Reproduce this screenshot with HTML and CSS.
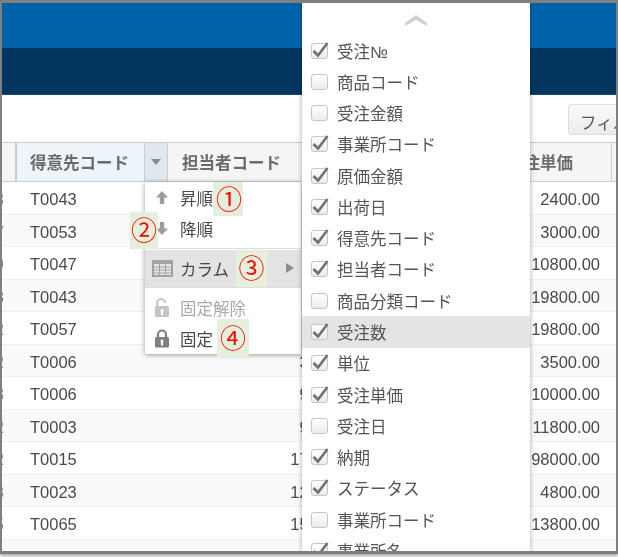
FILE: index.html
```html
<!DOCTYPE html>
<html lang="ja">
<head>
<meta charset="utf-8">
<title>受注一覧</title>
<link rel="stylesheet" href="styles.css">
</head>
<body>
<svg class="defs" width="0" height="0" aria-hidden="true">
  <symbol id="chk" viewBox="0 0 20 20"><path d="M3.5 11 8 15.5 17.5 3" fill="none" stroke="#707070" stroke-width="2.6"/></symbol>
</svg>
<div class="frame">
  <div class="bar-blue"></div>
  <div class="bar-navy"></div>
  <div class="toolbar"><div class="filter-btn">フィルタ</div></div>
  <div class="head row-grid">
    <div class="hc"></div>
    <div class="hc sorted"><span class="hc-label">得意先コード</span><span class="hc-drop"><i class="tri-down"></i></span></div>
    <div class="hc"><span class="hc-label">担当者コード</span></div>
    <div class="hc"></div>
    <div class="hc"><span class="hc-label unit">受注単価</span></div>
    <div class="hc"></div>
  </div>
  <div class="row row-grid"><div class="c0">3</div><div class="c1">T0043</div><div class="c2"></div><div class="c3"></div><div class="c4">2400.00</div></div>
  <div class="row row-grid"><div class="c0">7</div><div class="c1">T0053</div><div class="c2"></div><div class="c3"></div><div class="c4">3000.00</div></div>
  <div class="row row-grid"><div class="c0">9</div><div class="c1">T0047</div><div class="c2"></div><div class="c3"></div><div class="c4">10800.00</div></div>
  <div class="row row-grid"><div class="c0">3</div><div class="c1">T0043</div><div class="c2"></div><div class="c3"></div><div class="c4">19800.00</div></div>
  <div class="row row-grid"><div class="c0">2</div><div class="c1">T0057</div><div class="c2"></div><div class="c3"></div><div class="c4">19800.00</div></div>
  <div class="row row-grid"><div class="c0">2</div><div class="c1">T0006</div><div class="c2">350</div><div class="c3"></div><div class="c4">3500.00</div></div>
  <div class="row row-grid"><div class="c0">3</div><div class="c1">T0006</div><div class="c2">900</div><div class="c3"></div><div class="c4">10000.00</div></div>
  <div class="row row-grid"><div class="c0">2</div><div class="c1">T0003</div><div class="c2">950</div><div class="c3"></div><div class="c4">11800.00</div></div>
  <div class="row row-grid"><div class="c0">2</div><div class="c1">T0015</div><div class="c2">1700</div><div class="c3"></div><div class="c4">98000.00</div></div>
  <div class="row row-grid"><div class="c0">3</div><div class="c1">T0023</div><div class="c2">1200</div><div class="c3"></div><div class="c4">4800.00</div></div>
  <div class="row row-grid"><div class="c0">5</div><div class="c1">T0065</div><div class="c2">1500</div><div class="c3"></div><div class="c4">13800.00</div></div>
  <div class="row row-grid"><div class="c0">3</div><div class="c1">T0043</div><div class="c2">1800</div><div class="c3"></div><div class="c4">9800.00</div></div>

  <div class="menu1">
    <div class="mi"><span class="mi-ico"><svg width="14" height="15" viewBox="0 0 14 15"><path d="M7 1 13 7.5H9.2V14H4.8V7.5H1Z" fill="#9c9c9c"/></svg></span>昇順</div>
    <div class="mi"><span class="mi-ico"><svg width="14" height="15" viewBox="0 0 14 15"><path d="M7 14 13 7.5H9.2V1H4.8V7.5H1Z" fill="#9c9c9c"/></svg></span>降順</div>
    <div class="msep"></div>
    <div class="mi mi-col"><span class="mi-ico"><svg width="21" height="17" viewBox="0 0 21 17"><rect width="21" height="17" fill="#a2a2a2"/><path d="M2 4h5v11H2zM8 4h5v11H8zM14 4h5v11h-5z" fill="#e6e6e6"/><path d="M2 7h5M2 10h5M2 13h5M8 7h5M8 10h5M8 13h5M14 7h5M14 10h5M14 13h5" stroke="#a2a2a2"/></svg></span>カラム<i class="tri-right"></i></div>
    <div class="msep2"></div>
    <div class="mi mi-off"><span class="mi-ico"><svg width="16" height="20" viewBox="0 0 16 20"><path d="M3 9V5a4 4 0 0 1 8 0" fill="none" stroke="#c4c4c4" stroke-width="2"/><rect x="1" y="8" width="14" height="11" rx="1.5" fill="#c4c4c4"/><path d="M8 11a1.7 1.7 0 0 1 1 3v3H7v-3a1.7 1.7 0 0 1 1-3Z" fill="#fff"/></svg></span>固定解除</div>
    <div class="mi"><span class="mi-ico"><svg width="16" height="19" viewBox="0 0 16 19"><path d="M4 9V5.5a4 4 0 0 1 8 0V9" fill="none" stroke="#808080" stroke-width="2.2"/><rect x="1" y="8" width="14" height="10.5" rx="1.5" fill="#808080"/><path d="M8 10.5a1.7 1.7 0 0 1 1 3V16.5H7v-3a1.7 1.7 0 0 1 1-3Z" fill="#fff"/></svg></span>固定</div>
  </div>

  <div class="menu2">
    <div class="chev"><svg width="22" height="11" viewBox="0 0 22 11"><path d="M0 8 11 0 22 8V11L11 5 0 11Z" fill="#d0d0d0"/></svg></div>
    <div class="ci"><span class="cb"><svg class="ck"><use href="#chk"/></svg></span>受注№</div>
    <div class="ci"><span class="cb"></span>商品コード</div>
    <div class="ci"><span class="cb"></span>受注金額</div>
    <div class="ci"><span class="cb"><svg class="ck"><use href="#chk"/></svg></span>事業所コード</div>
    <div class="ci"><span class="cb"><svg class="ck"><use href="#chk"/></svg></span>原価金額</div>
    <div class="ci"><span class="cb"><svg class="ck"><use href="#chk"/></svg></span>出荷日</div>
    <div class="ci"><span class="cb"><svg class="ck"><use href="#chk"/></svg></span>得意先コード</div>
    <div class="ci"><span class="cb"><svg class="ck"><use href="#chk"/></svg></span>担当者コード</div>
    <div class="ci"><span class="cb"></span>商品分類コード</div>
    <div class="ci ci-hover"><span class="cb"><svg class="ck"><use href="#chk"/></svg></span>受注数</div>
    <div class="ci"><span class="cb"><svg class="ck"><use href="#chk"/></svg></span>単位</div>
    <div class="ci"><span class="cb"><svg class="ck"><use href="#chk"/></svg></span>受注単価</div>
    <div class="ci"><span class="cb"></span>受注日</div>
    <div class="ci"><span class="cb"><svg class="ck"><use href="#chk"/></svg></span>納期</div>
    <div class="ci"><span class="cb"><svg class="ck"><use href="#chk"/></svg></span>ステータス</div>
    <div class="ci"><span class="cb"></span>事業所コード</div>
    <div class="ci"><span class="cb"><svg class="ck"><use href="#chk"/></svg></span>事業所名</div>
  </div>

  <div class="tag tag1">①</div>
  <div class="tag tag2">②</div>
  <div class="tag tag3">③</div>
  <div class="tag tag4">④</div>
</div>
</body>
</html>
```
FILE: styles.css
```css
* { box-sizing: border-box; }
html, body { margin: 0; padding: 0; background: #fff; }
body {
  width: 618px;
  height: 557px;
  overflow: hidden;
  font-family: "Liberation Sans", "Noto Sans CJK JP", sans-serif;
  font-size: 16.5px;
  color: #444;
}
.defs { position: absolute; }
.frame {
  position: relative;
  width: 618px;
  height: 554px;
  overflow: hidden;
  background: #fff;
  border: solid #808080;
  border-width: 3px 2px 3px 2px;
  box-shadow: 0 2px 3px rgba(0, 0, 0, .35);
  filter: blur(.4px);
}
.bar-blue { height: 45px; background: #0063a9; }
.bar-navy { height: 47px; background: #023660; border-bottom: 1px solid #164b76; }
.toolbar {
  height: 47px;
  padding: 9px 0 0 566px;
  overflow: hidden;
}
.filter-btn {
  width: 90px;
  height: 31px;
  padding: 5px 0 0 11px;
  border: 1px solid #ddd;
  border-radius: 3px;
  background: linear-gradient(#fafafa, #ececec);
  color: #555;
  white-space: nowrap;
}
.row-grid {
  display: grid;
  grid-template-columns: 14px 152px 165px 161px 118px 4px;
}
.head {
  height: 40px;
  background: #f5f5f5;
  border-top: 1px solid #ccc;
  border-bottom: 1px solid #ccc;
}
.hc {
  display: flex;
  align-items: center;
  border-right: 1px solid #ccc;
  color: #6b6b6b;
  font-weight: 700;
  overflow: hidden;
  white-space: nowrap;
}
.hc:nth-child(3) { border-right: 0; }
.hc:nth-child(4) { border-right: 0; }
.hc:nth-child(6) { border-right: 0; }
.hc-label { padding-left: 13px; flex: 1; }
.sorted { background: #edf4fa; border-left: 1px solid #ccc; }
.hc-drop {
  width: 23px;
  height: 100%;
  display: flex;
  align-items: center;
  justify-content: center;
  background: #dde8f1;
  border-left: 1px solid #ccc;
}
.hc:nth-child(3) .hc-label { padding-left: 14px; }
.tri-down {
  width: 0;
  height: 0;
  border: solid transparent;
  border-width: 6px 5px 0;
  border-top-color: #8c8c8c;
}
.row {
  height: 32.5px;
  line-height: 33px;
  padding-top: 1px;
  border-bottom: 1px solid #eee;
  white-space: nowrap;
  color: #4a4a4a;
}
.row:nth-of-type(odd) { background: #fff; }
.row:nth-of-type(even) { background: #fafafa; }
.c0 { text-align: right; padding-right: 12px; overflow: hidden; color: #888; direction: rtl; }
.c1 { padding-left: 14px; }
.c2 { text-align: right; padding-right: 6px; }
.c4 { text-align: right; padding-right: 12px; }

.menu1 {
  position: absolute;
  left: 143px;
  top: 179px;
  width: 156px;
  height: 172px;
  background: #fff;
  box-shadow: 0 1px 5px rgba(0, 0, 0, .4);
  color: #484848;
}
.mi {
  position: relative;
  display: flex;
  align-items: center;
  height: 31px;
  white-space: nowrap;
}
.mi-ico {
  width: 35px;
  flex: none;
  display: flex;
  justify-content: center;
  padding-right: 1px;
}
.msep { height: 1px; margin: 4px 0 1px; background: #ddd; }
.msep2 { height: 1px; margin: 0 0 4px; background: #ddd; }
.mi-col { height: 37px; background: #e3e3e3; }
.mi-off { color: #aaa; }
.tri-right {
  position: absolute;
  right: 7px;
  top: 13px;
  width: 0;
  height: 0;
  border: solid transparent;
  border-width: 5.5px 0 5.5px 8px;
  border-left-color: #8c8c8c;
}

.menu2 {
  position: absolute;
  left: 300px;
  top: 0;
  width: 228px;
  height: 548px;
  overflow: hidden;
  background: #fff;
  box-shadow: 0 0 5px rgba(0, 0, 0, .35);
  color: #555;
}
.chev {
  height: 32px;
  display: flex;
  justify-content: center;
  padding: 12px 0 0 0;
}
.ci {
  display: flex;
  align-items: center;
  gap: 9px;
  height: 31.27px;
  padding-left: 9px;
  white-space: nowrap;
}
.ci-hover { background: #e4e4e4; }
.cb {
  position: relative;
  width: 17px;
  height: 16px;
  flex: none;
  border: 1px solid #c6c6c6;
  border-radius: 3px;
  background: linear-gradient(#fff, #ececec);
}
.ck {
  position: absolute;
  left: -2px;
  top: -4px;
  width: 20px;
  height: 20px;
}

.tag {
  position: absolute;
  display: flex;
  align-items: center;
  justify-content: center;
  padding-bottom: 3px;
  background: #e4efdc;
  color: #f00;
  font-family: "Noto Sans CJK JP", sans-serif;
  font-size: 26px;
  line-height: 1;
}
.tag1 { left: 211px; top: 179px; width: 30px; height: 34px; padding-left: 2px; }
.tag2 { left: 128px; top: 209px; width: 28px; height: 37px; }
.tag3 { left: 234px; top: 247px; width: 31px; height: 37px; }
.tag4 { left: 215px; top: 316px; width: 32px; height: 38px; }
```
